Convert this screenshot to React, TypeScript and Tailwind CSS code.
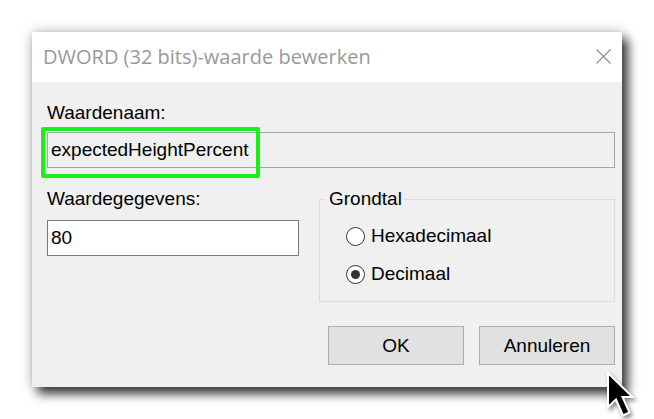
export default function App() {
  return (
    <div className="relative w-[654px] h-[419px] overflow-hidden bg-white pl-8 pt-8 font-['Liberation_Sans',Arial,sans-serif]">
      <div className="w-[590px] h-[355px] flex flex-col bg-[#f0f0f0] shadow-[6px_7px_10px_rgba(0,0,0,0.75),0_0_12px_rgba(0,0,0,0.25)]">
        {/* title bar */}
        <div className="h-[50px] shrink-0 bg-white flex items-center justify-between pl-[11px] pr-[11px]">
          <span className="font-['Open_Sans',sans-serif] text-[20px] leading-[28px] text-[#999999]">
            DWORD (32 bits)-waarde bewerken
          </span>
          <svg width="15" height="15" viewBox="0 0 15 15" className="mb-[1px]">
            <path d="M0.5 0.5 L14.5 14.5 M14.5 0.5 L0.5 14.5" stroke="#8a8a8a" strokeWidth="1.1" fill="none" />
          </svg>
        </div>

        <div className="flex flex-col pl-[15px] pr-[7px] pt-[20px] text-[19px] leading-[22px] text-black">
          <div className="h-[22px]">Waardenaam:</div>
          <div className="relative mt-[8px] h-[36px] border border-[#a5a5a5] flex items-center pl-[3px]">
            expectedHeightPercent
            <div className="absolute -left-[7px] -top-[6px] w-[219px] h-[51px] border-4 border-[#19f019] rounded-[2px]" />
          </div>

          <div className="mt-[20px] flex gap-[20px]">
            <div className="w-[252px] flex flex-col">
              <div className="h-[22px]">Waardegegevens:</div>
              <div className="mt-[10px] h-[36px] bg-white border border-[#7a7a7a] flex items-center pl-[3px]">80</div>
            </div>
            <fieldset className="flex-1 border border-[#dcdcdc] pb-[16px]">
              <legend className="ml-[6px] px-[3px] leading-[22px]">Grondtal</legend>
              <div className="pl-[26px]">
                <div className="mt-[15px] flex items-center gap-[6px] h-[22px]">
                  <span className="w-[19px] h-[19px] rounded-full border border-[#333333] bg-white" />
                  <span>Hexadecimaal</span>
                </div>
                <div className="mt-[16px] flex items-center gap-[6px] h-[22px]">
                  <span className="w-[19px] h-[19px] rounded-full border border-[#333333] bg-white flex items-center justify-center">
                    <span className="w-[9px] h-[9px] rounded-full bg-[#333333]" />
                  </span>
                  <span>Decimaal</span>
                </div>
              </div>
            </fieldset>
          </div>

          <div className="mt-[24px] flex justify-end gap-[15px]">
            <button className="w-[136px] h-[39px] border border-[#adadad] bg-[#e1e1e1] leading-[22px]">OK</button>
            <button className="w-[136px] h-[39px] border border-[#adadad] bg-[#e1e1e1] leading-[22px]">Annuleren</button>
          </div>
        </div>
      </div>

      {/* mouse pointer */}
      <svg
        width="30"
        height="48"
        viewBox="-2 -2 30 48"
        className="absolute left-[606px] top-[371px] drop-shadow-[2px_3px_2px_rgba(0,0,0,0.45)]"
      >
        <polygon
          points="0,0 0,34 8,26.5 15,42.5 21.5,39.5 14.5,24 24.5,24"
          fill="#000"
          stroke="#fff"
          strokeWidth="2"
          strokeLinejoin="miter"
        />
      </svg>
    </div>
  );
}
